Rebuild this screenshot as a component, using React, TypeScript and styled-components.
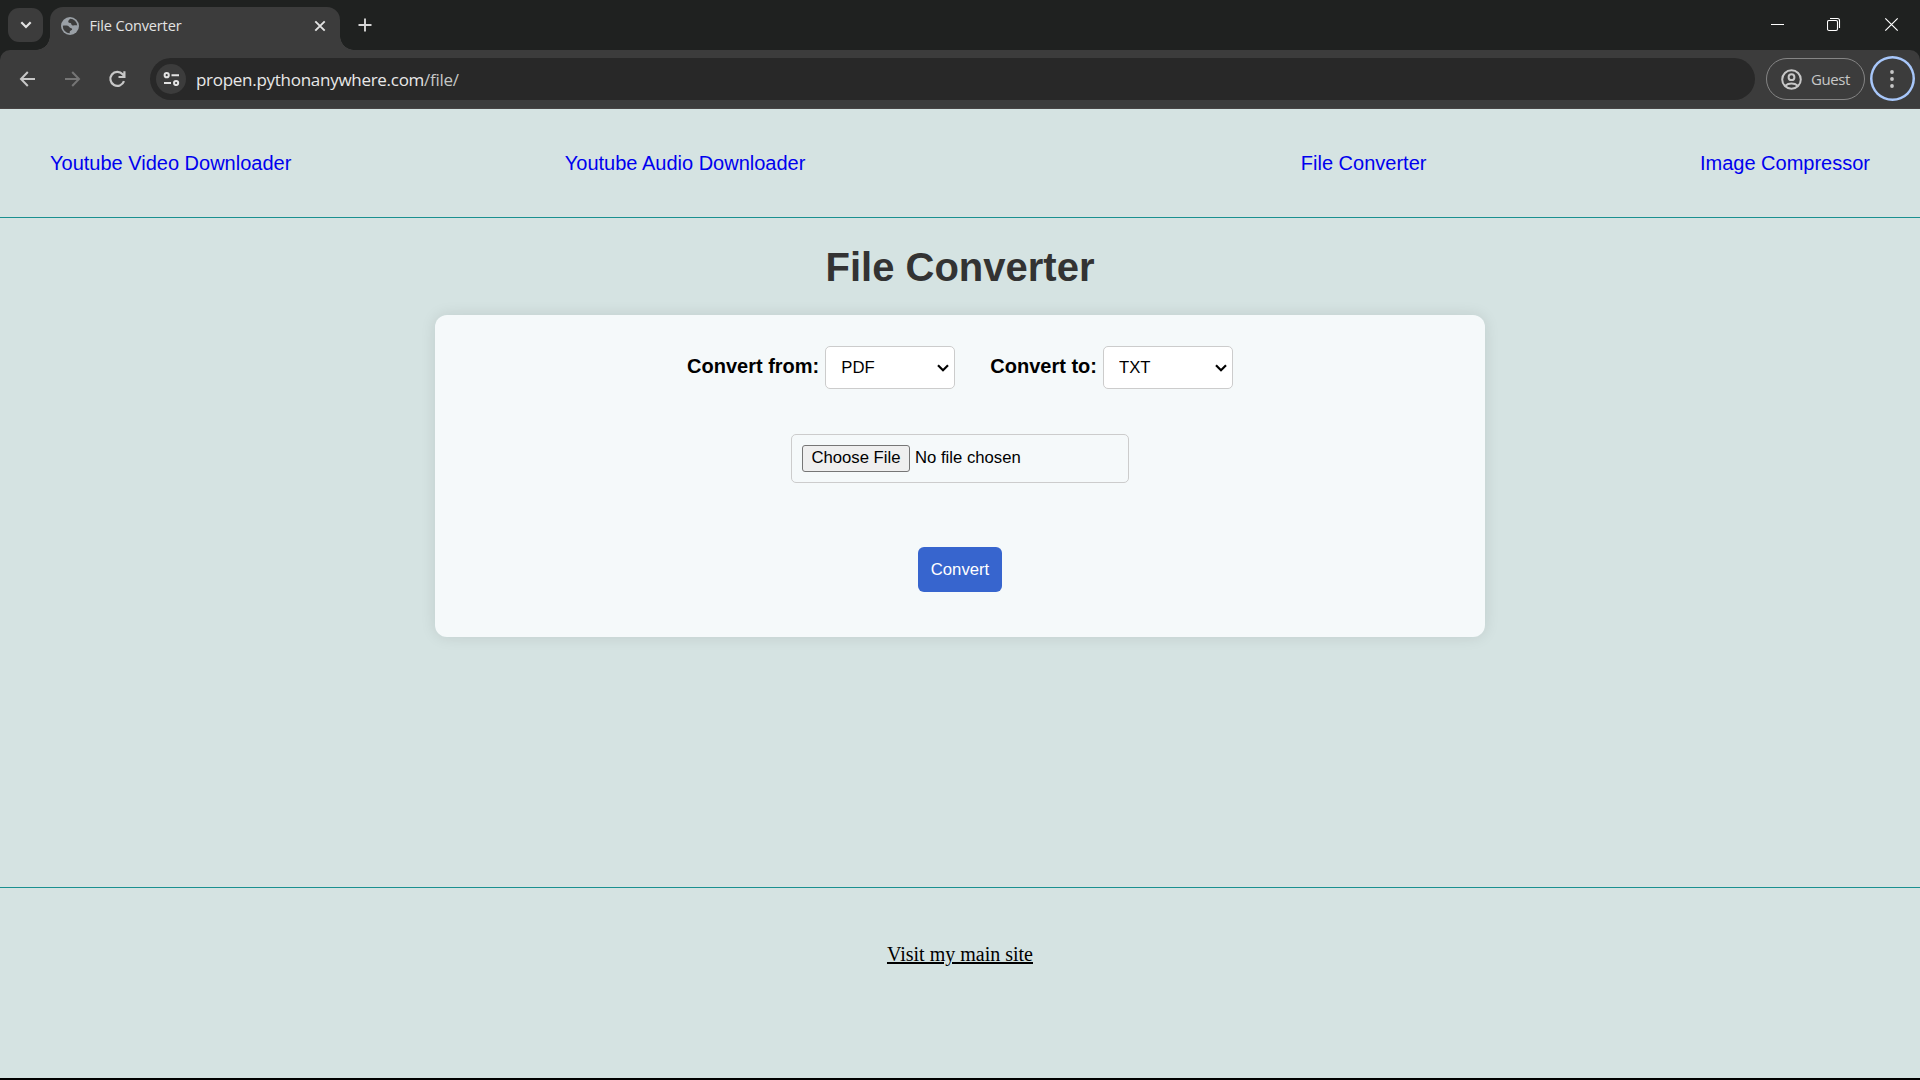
import React from "react";
import styled, { createGlobalStyle } from "styled-components";

const Global = createGlobalStyle`
  * { box-sizing: border-box; }
  body { margin: 0; background: #000; font-family: "Liberation Sans", Arial, sans-serif; }
`;

const Window = styled.div`
  display: flex;
  flex-direction: column;
  width: 1920px;
  height: 1080px;
  padding-bottom: 2px;
  overflow: hidden;
  background: #000;
`;

const chromeFont = `"Open Sans", "Noto Sans", sans-serif`;

const TabStrip = styled.div`
  display: flex;
  height: 50px;
  background: #1f2120;
  padding-left: 8px;
`;

const TabSearch = styled.button`
  display: grid;
  place-items: center;
  width: 35px;
  height: 34px;
  margin: 8px 7px 0 0;
  padding: 0;
  border: 0;
  border-radius: 11px;
  background: #3c3c3c;
`;

const Tab = styled.div`
  position: relative;
  display: flex;
  align-items: center;
  width: 290px;
  height: 43px;
  margin-top: 7px;
  padding: 0 14px 6px 11px;
  border-radius: 13px 13px 0 0;
  background: #3c3c3c;
  &::before, &::after {
    content: "";
    position: absolute;
    bottom: 0;
    width: 14px;
    height: 14px;
  }
  &::before { left: -14px; background: radial-gradient(circle at 0 0, transparent 13.5px, #3c3c3c 14px); }
  &::after { right: -14px; background: radial-gradient(circle at 100% 0, transparent 13.5px, #3c3c3c 14px); }
`;

const TabTitle = styled.span`
  flex: 1;
  margin-left: 10.5px;
  font: 14.5px/20px ${chromeFont};
  letter-spacing: -0.15px;
  color: #e3e3e3;
`;

const NewTab = styled.div`
  display: flex;
  margin: 18px 0 0 18px;
`;

const WindowButtons = styled.div`
  display: flex;
  gap: 42px;
  margin: 17px 21px 0 auto;
`;

const ToolbarBack = styled.div`
  height: 59px;
  background: #1f2120;
`;

const Toolbar = styled.div`
  display: flex;
  align-items: flex-start;
  height: 59px;
  padding: 8px 5px 0 18px;
  border-bottom: 1px solid #484444;
  border-radius: 10px 10px 0 0;
  background: #3c3c3c;
`;

const NavIcon = styled.div<{ $gap: number }>`
  display: flex;
  margin: 11px ${(p) => p.$gap}px 0 0;
`;

const AddressBar = styled.div`
  display: flex;
  align-items: center;
  flex: 1;
  height: 42px;
  padding-left: 6px;
  border-radius: 21px;
  background: #282828;
`;

const SiteInfo = styled.div`
  display: grid;
  place-items: center;
  width: 30px;
  height: 30px;
  border-radius: 50%;
  background: #3c3c3c;
`;

const Url = styled.span`
  margin: 1px 0 0 10px;
  font: 17px/24px ${chromeFont};
  letter-spacing: -0.28px;
  color: #e8e8e8;
  white-space: nowrap;
`;

const UrlPath = styled.span`
  color: #c4c7c5;
`;

const Profile = styled.div`
  display: flex;
  align-items: center;
  gap: 9px;
  width: 99px;
  height: 42px;
  margin: 0 5px 0 11px;
  padding-left: 14px;
  border: 1px solid #858585;
  border-radius: 21px;
  font: 15px/20px ${chromeFont};
  letter-spacing: -0.4px;
  color: #c7c7c7;
`;

const MenuButton = styled.div`
  display: grid;
  place-items: center;
  width: 45px;
  height: 45px;
  margin-top: -2px;
  border-radius: 50%;
  box-shadow: inset 0 0 0 2.5px #a8c7fa;
`;

const Page = styled.div`
  display: flex;
  flex-direction: column;
  align-items: center;
  flex: 1;
  background: #d5e3e2;
`;

const SiteNav = styled.nav`
  display: flex;
  justify-content: space-between;
  align-items: center;
  align-self: stretch;
  height: 109px;
  padding: 0 50px;
  border-bottom: 1px solid #1a9090;
`;

const NavGroup = styled.div`
  display: flex;
  gap: 273.5px;
`;

const NavLink = styled.a`
  font-size: 20px;
  line-height: 24px;
  color: #0000ee;
  text-decoration: none;
`;

const Title = styled.h1`
  margin: 26px 0 24px;
  font-size: 40px;
  line-height: 47px;
  font-weight: bold;
  color: #333;
`;

const Card = styled.form`
  display: flex;
  flex-direction: column;
  align-items: center;
  width: 1050px;
  height: 322px;
  padding-top: 31px;
  border-radius: 12px;
  background: #f5f9fa;
  box-shadow: 0 0 15px rgba(0, 0, 0, 0.1);
`;

const Row = styled.div`
  display: flex;
  gap: 35px;
`;

const Field = styled.label`
  display: flex;
  gap: 6px;
  font-size: 20px;
  line-height: 40px;
  font-weight: bold;
  color: #000;
`;

const SelectBox = styled.span`
  position: relative;
  display: flex;
`;

const Chevron = styled.svg`
  position: absolute;
  right: 6px;
  top: 18px;
  pointer-events: none;
`;

const Select = styled.select`
  appearance: none;
  width: 130px;
  height: 43px;
  padding: 0 0 0 15px;
  border: 1px solid #ccc;
  border-radius: 5px;
  background-color: #fff;
  font: 16.700px "Liberation Sans", Arial, sans-serif;
  color: #000;
`;

const FilePicker = styled.label`
  display: flex;
  gap: 5px;
  width: 338px;
  height: 49px;
  margin-top: 45px;
  padding: 10px;
  border: 1px solid #ccc;
  border-radius: 5px;
  font-size: 16.700px;
  line-height: 25px;
  color: #000;
`;

const ChooseFile = styled.span`
  width: 108px;
  height: 27px;
  border: 1px solid #767676;
  border-radius: 3px;
  background: #efefef;
  line-height: 23px;
  text-align: center;
`;

const Submit = styled.button`
  width: 84px;
  height: 45px;
  margin-top: 64px;
  padding: 0;
  border: 0;
  border-radius: 6px;
  background: #3765ce;
  font: 16.700px "Liberation Sans", Arial, sans-serif;
  color: #fff;
`;

const Footer = styled.footer`
  display: flex;
  justify-content: center;
  align-self: stretch;
  margin-top: auto;
  height: 191px;
  padding-top: 54px;
  border-top: 1px solid #1a9090;
`;

const MainSiteLink = styled.a`
  font: 20px/24px "Liberation Serif", "Times New Roman", serif;
  color: #000;
  text-decoration: underline;
`;

const Converter = ({ label, value }: { label: string; value: string }) => (
  <Field>
    {label}
    <SelectBox>
      <Select defaultValue={value}>
        <option>{value}</option>
      </Select>
      <Chevron width="12" height="8" viewBox="0 0 12 8" fill="none" stroke="#000" strokeWidth="2.2">
        <path d="M1 1.200l5 5 5-5" />
      </Chevron>
    </SelectBox>
  </Field>
);

export default function App() {
  return (
    <Window>
      <Global />
      <TabStrip>
        <TabSearch>
          <svg width="12" height="8" viewBox="0 0 12 8" fill="none" stroke="#e3e3e3" strokeWidth="2.2">
            <path d="M1.3 1.3 6 6l4.700-4.700" />
          </svg>
        </TabSearch>
        <Tab>
          <svg width="18" height="18" viewBox="0 0 18 18">
            <circle cx="9" cy="9" r="9" fill="#9aa0a6" />
            <path
              d="M9.300 1.800C8 2.700 7.100 3.600 7.300 4.900c.2 1 1.500.8 2.300 1.200.9.500.5 1.700 1.500 2.100 1.500.6 3.300-.4 5.100.3A7.200 7.200 0 0 0 9.300 1.800Z"
              fill="#3c3c3c"
            />
            <path
              d="M1.800 8.700c1.700-.4 3.500-.3 5 .1 1.300.4 1.600 1.900 2.800 2.200 1 .3 1.700.3 1.500 1.400-.2.900-1.500.9-2 1.600-.5.600-.4 1.400-.3 2.200A7.200 7.200 0 0 1 1.800 8.700Z"
              fill="#3c3c3c"
            />
          </svg>
          <TabTitle>File Converter</TabTitle>
          <svg width="12" height="12" viewBox="0 0 12 12" stroke="#e3e3e3" strokeWidth="1.900">
            <path d="M1.300 1.300l9.400 9.400M10.700 1.300 1.300 10.700" />
          </svg>
        </Tab>
        <NewTab>
          <svg width="14" height="14" viewBox="0 0 14 14" stroke="#d6d6d6" strokeWidth="1.900">
            <path d="M7 .5v13M.5 7h13" />
          </svg>
        </NewTab>
        <WindowButtons>
          <svg width="15" height="15" viewBox="0 0 15 15">
            <path d="M1 7.500h13" stroke="#fff" />
          </svg>
          <svg width="15" height="15" viewBox="0 0 15 15" fill="none" stroke="#fff" strokeWidth="1.100">
            <rect x=".5" y="3.500" width="10" height="10" rx="1.500" />
            <path d="M3 1.500h7.500a2 2 0 0 1 2 2V11" />
          </svg>
          <svg width="15" height="15" viewBox="0 0 15 15" stroke="#fff" strokeWidth="1.200">
            <path d="M1.300 1.300l12.400 12.400M13.700 1.300 1.300 13.700" />
          </svg>
        </WindowButtons>
      </TabStrip>
      <ToolbarBack>
        <Toolbar>
          <NavIcon $gap={26}>
            <svg width="19" height="20" viewBox="0 0 19 20" fill="none" stroke="#c7c7c7" strokeWidth="2">
              <path d="M17 10H3.500M9.800 3 3 10l6.800 7" />
            </svg>
          </NavIcon>
          <NavIcon $gap={26}>
            <svg width="19" height="20" viewBox="0 0 19 20" fill="none" stroke="#757575" strokeWidth="2">
              <path d="M2 10h13.500M9.200 3 16 10l-6.800 7" />
            </svg>
          </NavIcon>
          <NavIcon $gap={24}>
            <svg width="18" height="20" viewBox="0 0 18 20" fill="none" stroke="#c7c7c7" strokeWidth="2.200">
              <path d="M16 12.200A7 7 0 1 1 14.600 5.200L16.200 7M16.400 2.200V8H10.500" />
            </svg>
          </NavIcon>
          <AddressBar>
            <SiteInfo>
              <svg width="17" height="14" viewBox="0 0 17 14" fill="none" stroke="#e3e3e3" strokeWidth="2">
                <circle cx="3.700" cy="3.200" r="2.100" />
                <path d="M8.500 3.200H16M1 11h7" />
                <circle cx="13.100" cy="11" r="2.100" />
              </svg>
            </SiteInfo>
            <Url>
              propen.pythonanywhere.com<UrlPath>/file/</UrlPath>
            </Url>
          </AddressBar>
          <Profile>
            <svg width="21" height="21" viewBox="0 0 21 21" fill="none" stroke="#c7c7c7" strokeWidth="2">
              <circle cx="10.500" cy="10.500" r="9.300" />
              <circle cx="10.500" cy="8.200" r="2.900" />
              <path d="M4.200 16.800c3.600-3 9-3 12.600 0" />
            </svg>
            Guest
          </Profile>
          <MenuButton>
            <svg width="5" height="18" viewBox="0 0 5 18" fill="#c7c7c7">
              <circle cx="2" cy="2" r="1.900" />
              <circle cx="2" cy="9" r="1.900" />
              <circle cx="2" cy="16" r="1.900" />
            </svg>
          </MenuButton>
        </Toolbar>
      </ToolbarBack>
      <Page>
        <SiteNav>
          <NavGroup>
            <NavLink>Youtube Video Downloader</NavLink>
            <NavLink>Youtube Audio Downloader</NavLink>
          </NavGroup>
          <NavGroup>
            <NavLink>File Converter</NavLink>
            <NavLink>Image Compressor</NavLink>
          </NavGroup>
        </SiteNav>
        <Title>File Converter</Title>
        <Card>
          <Row>
            <Converter label="Convert from:" value="PDF" />
            <Converter label="Convert to:" value="TXT" />
          </Row>
          <FilePicker>
            <ChooseFile>Choose File</ChooseFile>
            No file chosen
            <input type="file" hidden />
          </FilePicker>
          <Submit type="button">Convert</Submit>
        </Card>
        <Footer>
          <MainSiteLink>Visit my main site</MainSiteLink>
        </Footer>
      </Page>
    </Window>
  );
}
